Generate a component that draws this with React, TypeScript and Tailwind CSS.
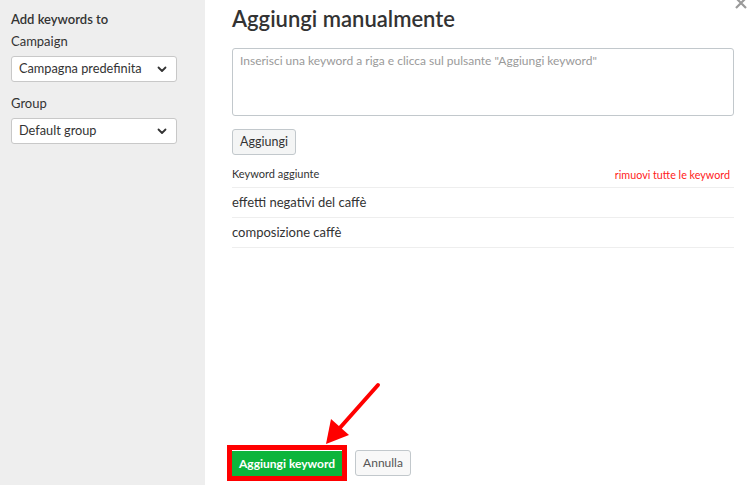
import React from "react";

function Chevron() {
  return (
    <svg width="12" height="12" viewBox="0 0 12 12" className="shrink-0">
      <path d="M2.5 4.5 L6 8 L9.5 4.5" fill="none" stroke="#333" strokeWidth="1.8" strokeLinecap="round" strokeLinejoin="round" />
    </svg>
  );
}

function Select({ label }: { label: string }) {
  return (
    <div className="flex h-[26px] w-[166px] items-center justify-between rounded-[3px] border border-[#c8c8c8] bg-white pl-[7px] pr-[8px] text-[12.75px] text-[#333]">
      <span>{label}</span>
      <Chevron />
    </div>
  );
}

export default function App() {
  return (
    <div
      className="relative flex h-[485px] w-[750px] overflow-hidden bg-white text-[#333]"
      style={{ fontFamily: 'Lato, "Noto Sans", sans-serif' }}
    >
      <aside className="flex w-[205px] shrink-0 flex-col bg-[#eeeeee] pl-[11px] pt-[10px]">
        <div className="text-[13px] font-semibold leading-[18px]">Add keywords to</div>
        <div className="mt-[4px] text-[13px] leading-[18px]">Campaign</div>
        <div className="mt-[6px]">
          <Select label="Campagna predefinita" />
        </div>
        <div className="mt-[12px] text-[13px] leading-[18px]">Group</div>
        <div className="mt-[6px]">
          <Select label="Default group" />
        </div>
      </aside>

      <main className="flex flex-1 flex-col pl-[27px] pr-[16px]">
        <h1 className="mt-[4px] text-[22px] font-semibold leading-[30px] text-[#333]">Aggiungi manualmente</h1>
        <div className="mt-[14px] h-[68px] w-full rounded-[3px] border border-[#c2c8cc] px-[7px] pt-[3px] text-[12px] text-[#9a9a9a]">
          Inserisci una keyword a riga e clicca sul pulsante "Aggiungi keyword"
        </div>
        <div className="mt-[12px]">
          <button className="h-[26px] rounded-[3px] border border-[#c2c8cc] bg-[#f4f5f5] px-[7px] text-[12.5px] text-[#333]">
            Aggiungi
          </button>
        </div>
        <div className="mt-[9px] flex items-center justify-between border-b border-[#eeeeee] pb-[4px] pr-[4px] pt-[2px] text-[11px]">
          <span className="text-[#333]">Keyword aggiunte</span>
          <span className="text-[10.75px] text-[#ff1a1a]">rimuovi tutte le keyword</span>
        </div>
        <div className="flex h-[30px] items-center border-b border-[#eeeeee] text-[13px]">effetti negativi del caffè</div>
        <div className="flex h-[30px] items-center border-b border-[#eeeeee] text-[13px]">composizione caffè</div>

        <div className="mt-auto mb-[4px] flex items-center gap-[8px] pl-0">
          <div className="-ml-[5px] border-[5px] border-[#ff0000]">
            <button className="h-[25px] bg-[#0cb53b] px-[7px] text-[12px] font-bold text-white">
              Aggiungi keyword
            </button>
          </div>
          <button className="h-[26px] rounded-[3px] border border-[#c2c8cc] bg-[#f8f8f8] px-[7px] text-[12px] text-[#555]">
            Annulla
          </button>
        </div>
      </main>

      <svg className="absolute right-[2px] top-[-4px]" width="14" height="14" viewBox="0 0 14 14">
        <path d="M2 2 L12 12 M12 2 L2 12" stroke="#9a9a9a" strokeWidth="2.2" />
      </svg>

      <svg className="absolute left-0 top-0" width="750" height="485" viewBox="0 0 750 485" style={{ pointerEvents: "none" }}>
        <line x1="378" y1="385" x2="338" y2="430" stroke="#ff0000" strokeWidth="4" strokeLinecap="round" />
        <polygon points="326,444 331,419 349,435" fill="#ff0000" />
      </svg>
    </div>
  );
}
